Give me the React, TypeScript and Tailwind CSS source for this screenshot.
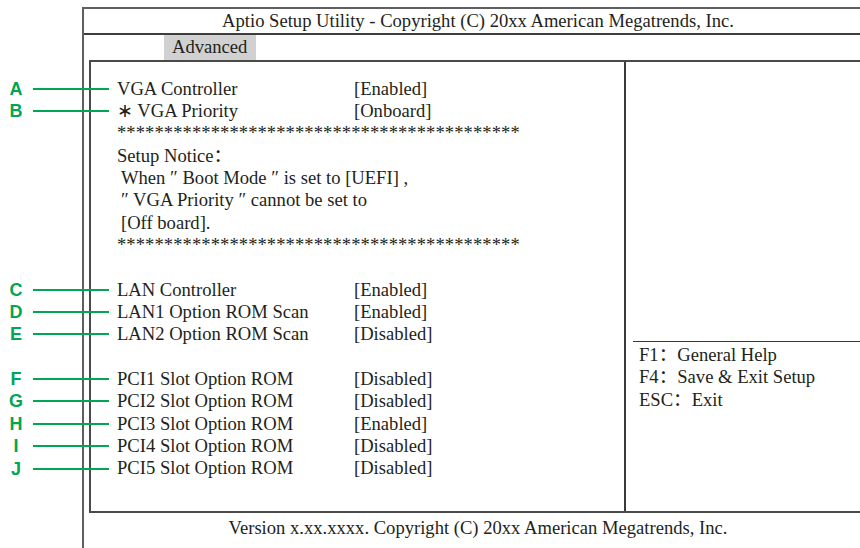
import React from "react";

type Row =
  | { kind: "item"; mark?: string; label: string; value: string }
  | { kind: "text"; text: string; indent?: boolean }
  | { kind: "blank" };

const STARS = "*".repeat(43);

const rows: Row[] = [
  { kind: "item", mark: "A", label: "VGA Controller", value: "[Enabled]" },
  { kind: "item", mark: "B", label: "\u2217 VGA Priority", value: "[Onboard]" },
  { kind: "text", text: STARS },
  { kind: "text", text: "Setup Notice\uFF1A" },
  { kind: "text", text: "When \u2033 Boot Mode \u2033 is set to [UEFI] ,", indent: true },
  { kind: "text", text: "\u2033 VGA Priority \u2033 cannot be set to", indent: true },
  { kind: "text", text: "[Off board].", indent: true },
  { kind: "text", text: STARS },
  { kind: "blank" },
  { kind: "item", mark: "C", label: "LAN Controller", value: "[Enabled]" },
  { kind: "item", mark: "D", label: "LAN1 Option ROM Scan", value: "[Enabled]" },
  { kind: "item", mark: "E", label: "LAN2 Option ROM Scan", value: "[Disabled]" },
  { kind: "blank" },
  { kind: "item", mark: "F", label: "PCI1 Slot Option ROM", value: "[Disabled]" },
  { kind: "item", mark: "G", label: "PCI2 Slot Option ROM", value: "[Disabled]" },
  { kind: "item", mark: "H", label: "PCI3 Slot Option ROM", value: "[Enabled]" },
  { kind: "item", mark: "I", label: "PCI4 Slot Option ROM", value: "[Disabled]" },
  { kind: "item", mark: "J", label: "PCI5 Slot Option ROM", value: "[Disabled]" },
];

const helpKeys = [
  { key: "F1", text: "General Help" },
  { key: "F4", text: "Save & Exit Setup" },
  { key: "ESC", text: "Exit" },
];

// green letter + leader line pointing at a setting
function Callout({ mark }: { mark: string }) {
  return (
    <div className="absolute right-full top-1/2 mr-2 flex -translate-y-1/2 items-center">
      <span className="w-[24px] text-center font-['Liberation_Sans',Arial,sans-serif] text-[18px] font-bold leading-none text-[#00a651]">
        {mark}
      </span>
      <span className="ml-[5px] h-[2px] w-[76px] bg-[#00a651]" />
    </div>
  );
}

function SettingRow({ row }: { row: Row }) {
  if (row.kind === "blank") return <div className="h-[22.35px]" />;
  if (row.kind === "text") {
    return (
      <div className={`h-[22.35px] whitespace-pre ${row.indent ? "pl-[4px]" : ""}`}>
        {row.text.startsWith("*") ? <span className="tracking-[0.07px]">{row.text}</span> : row.text}
      </div>
    );
  }
  return (
    <div className="relative flex h-[22.35px] whitespace-pre">
      {row.mark && <Callout mark={row.mark} />}
      <span className="w-[237px]">{row.label}</span>
      <span>{row.value}</span>
    </div>
  );
}

export default function App() {
  return (
    <div className="relative h-[548px] w-[860px] overflow-hidden bg-white pl-[82px] pt-[7px] font-['Liberation_Serif','Times_New_Roman','Noto_Sans_CJK_SC',serif] text-[18.6px] leading-[22.35px] text-[#231f20]">
      <div className="flex h-[600px] w-[792px] flex-col border-x-2 border-t-2 border-[#5f5f5f]">
        {/* title bar */}
        <div className="flex h-[26px] items-center justify-center border-b-2 border-[#3d3d3d]">
          Aptio Setup Utility - Copyright (C) 20xx American Megatrends, Inc.
        </div>

        {/* menu tabs */}
        <div className="flex h-[25px] pl-[80px]">
          <div className="flex w-[92px] items-center bg-[#d1d1d1] pl-[8px]">Advanced</div>
        </div>

        {/* main box */}
        <div className="ml-[5px] flex h-[453px] border-2 border-r-0 border-[#4a4a4a]">
          <div className="w-[533px] pl-[26px] pt-[15.5px]">
            {rows.map((row, i) => (
              <SettingRow key={i} row={row} />
            ))}
          </div>
          <div className="flex flex-1 flex-col border-l-2 border-[#3a3a3a]">
            <div className="ml-[7px] mt-[279px] border-t-[1.5px] border-[#3a3a3a] pl-[6px] pt-[2px]">
              {helpKeys.map((h) => (
                <div key={h.key}>
                  {h.key}
                  {"\uFF1A"}
                  {h.text}
                </div>
              ))}
            </div>
          </div>
        </div>

        {/* footer */}
        <div className="flex h-[30px] items-center justify-center">
          Version x.xx.xxxx. Copyright (C) 20xx American Megatrends, Inc.
        </div>
      </div>
    </div>
  );
}
